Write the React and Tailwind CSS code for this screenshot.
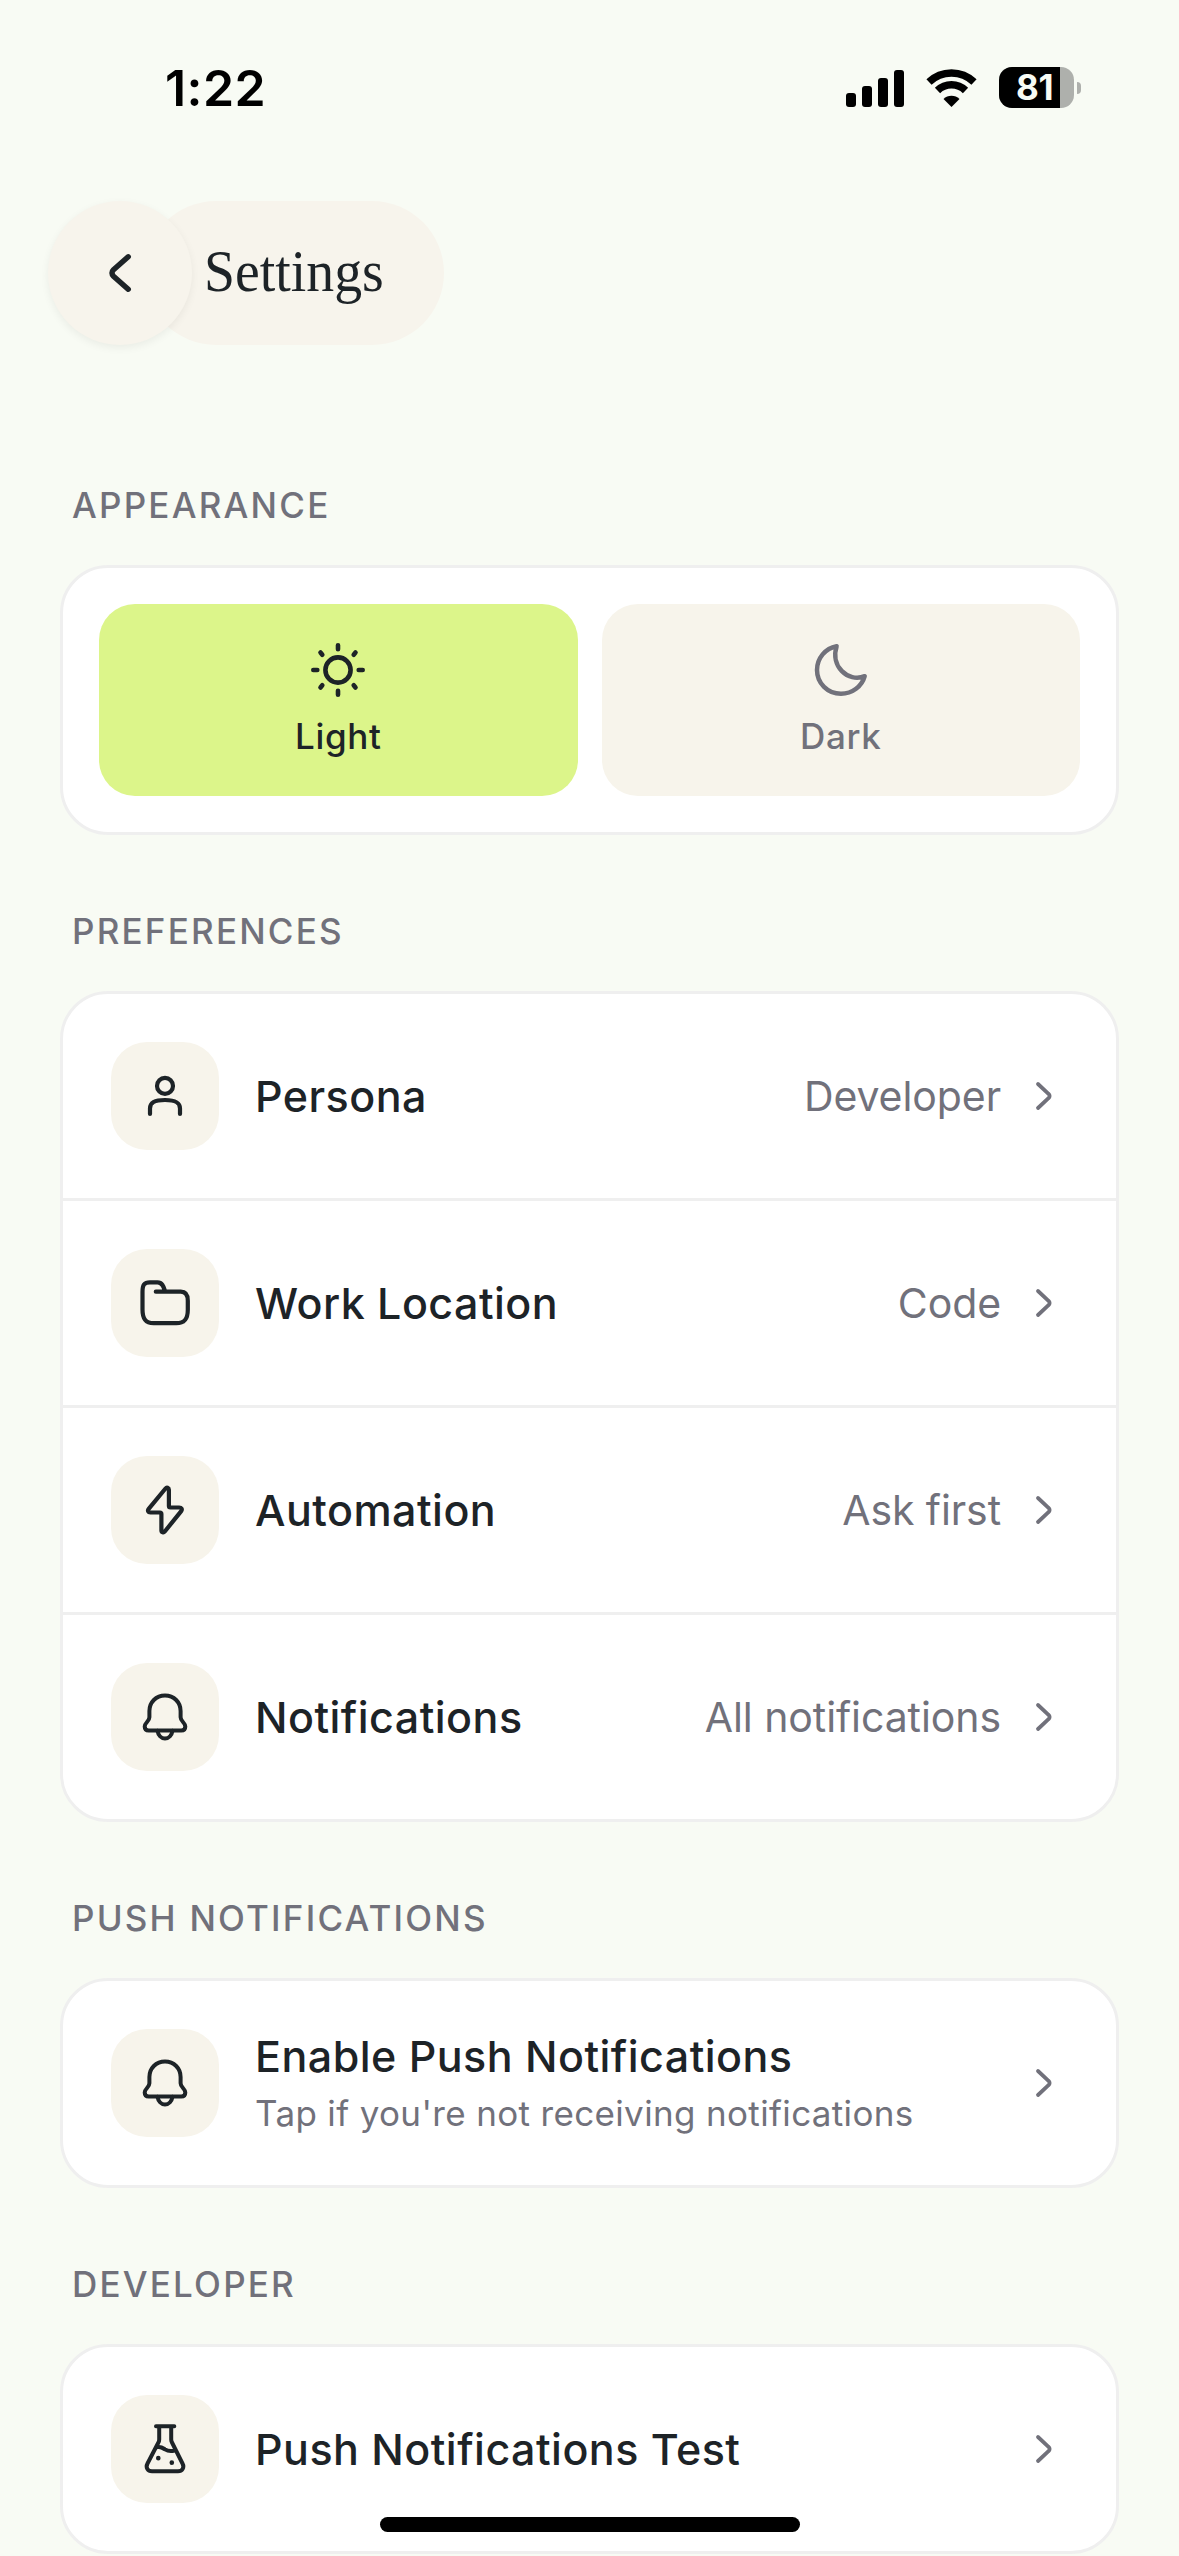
import { clsx } from 'clsx';

const stroke = {
  fill: 'none',
  stroke: 'currentColor',
  strokeLinecap: 'round',
  strokeLinejoin: 'round',
};

function SunIcon() {
  return (
    <svg className="size-[60px]" viewBox="0 0 60 60" strokeWidth="4.6" {...stroke}>
      <circle cx="30" cy="30" r="12.6" />
      <path d="M30 5.3v4M30 50.7v4M5.3 30h4M50.7 30h4M12.5 12.5l1.8 2.2M47.5 12.5l-1.8 2.2M12.5 47.5l1.8-2.2M47.5 47.5l-1.8-2.2" />
    </svg>
  );
}

function MoonIcon() {
  return (
    <svg className="size-[60px]" viewBox="0 0 60 60" strokeWidth="4.5" {...stroke}>
      <path d="M25.6 6.2C14.5 8.2 6 18.1 6 30c0 13.3 10.7 23.8 24 23.8 11.3 0 20.9-7.4 23.7-17.6-16.8 6.6-34.6-10.2-28.1-30Z" />
    </svg>
  );
}

function UserIcon() {
  return (
    <svg className="size-[54px]" viewBox="0 0 54 54" strokeWidth="4.2" {...stroke}>
      <circle cx="27" cy="16.9" r="8" />
      <path d="M12 45v-5.5c0-6 4.5-8.5 15-8.5s15 2.5 15 8.5V45" />
    </svg>
  );
}

function FolderIcon() {
  return (
    <svg className="size-[54px]" viewBox="0 0 54 54" strokeWidth="4.2" {...stroke}>
      <path d="M17.8 15.7h25c5.5 0 7 3.5 7 9v9c0 9-3 13.5-11.5 13.5H15.7C7.5 47.2 4.5 42.5 4.5 33.5V16c0-7 1.5-9.7 7.5-9.7h7.5c4.5 0 6 3.5 7.5 8.5" />
    </svg>
  );
}

function BoltIcon() {
  return (
    <svg className="size-[54px]" viewBox="0 0 54 54" strokeWidth="4.2" {...stroke}>
      <path d="M30.9 15v8c0 .9.6 1.5 1.5 1.5h8.8c2.3 0 3.3 1.8 2 3.6L26.8 48.5c-1.2 1.4-3.4.8-3.4-1V31c0-.9-.6-1.5-1.5-1.5h-9.5c-2.3 0-3.1-2-1.7-3.7L27.5 5.500c1.200-1.400 3.400-.7 3.400 1.200Z" />
    </svg>
  );
}

function BellIcon() {
  return (
    <svg className="size-[54px]" viewBox="0 0 54 54" strokeWidth="4" {...stroke}>
      <path d="M27 5.5c-9 0-15.6 6.8-15.6 15.5v6.3c0 4.2-4.7 5.2-4.7 9.3 0 2.5 1.5 4 4 4h32.6c2.5 0 4-1.5 4-4 0-4.1-4.7-5.1-4.7-9.300V21C42.600 12.300 36 5.500 27 5.500Z" />
      <path d="M19.5 40.8c.8 4.600 3.900 7.700 7.500 7.700s6.700-3.100 7.500-7.700" />
    </svg>
  );
}

function FlaskIcon() {
  return (
    <svg className="size-[54px]" viewBox="0 0 54 54" strokeWidth="4" {...stroke}>
      <path d="M18 4.3h18.3M21.2 5v12.5c0 1-.2 2-.8 3L9.5 41.5c-2.2 4.3.3 7.7 4.5 7.7h26c4.2 0 6.7-3.4 4.5-7.7L34 20.5c-.5-1-.8-2-.8-3V5" />
      <path d="M19 25.2c3.5-1.2 5.5.5 8 2.2 2.5 1.6 5.5 2.2 9.5 1.2" />
      <path d="M20.3 36v.3M33.8 40.5v.3" strokeWidth="4.6" />
    </svg>
  );
}

function ChevronRight() {
  return (
    <svg className="h-[36px] w-[20px] shrink-0" viewBox="0 0 20 36" strokeWidth="3.8" {...stroke}>
      <path d="M4 6l10.5 9.8c1.5 1.3 1.5 3.1 0 4.4L4 30" />
    </svg>
  );
}

function StatusBar() {
  return (
    <div className="flex h-[60px] items-center justify-between pt-px pr-[98px] pl-[165px] text-black">
      <span className="text-[50px] leading-none font-semibold tracking-[0.008em]">1:22</span>
      <div className="flex items-center">
        <svg className="h-[38px] w-[58px]" viewBox="0 0 58 38" fill="currentColor">
          <rect x="0" y="24" width="10" height="14" rx="3" />
          <rect x="16" y="17" width="10" height="21" rx="3" />
          <rect x="32" y="9" width="10" height="29" rx="3" />
          <rect x="48" y="1" width="10" height="37" rx="3" />
        </svg>
        <svg className="ml-[22px] h-[38px] w-[51px]" viewBox="0 0 51 38">
          <path d="M3 13A32.5 32.5 0 0 1 48 13" fill="none" stroke="currentColor" strokeWidth="7.5" />
          <path d="M11.5 21.5a20 20 0 0 1 28 0" fill="none" stroke="currentColor" strokeWidth="7.5" />
          <path d="M17.5 30a11.5 11.5 0 0 1 16 0l-8 8Z" fill="currentColor" />
        </svg>
        <div className="ml-[22px] flex h-[41px] w-[75px] items-center overflow-hidden rounded-[13px] bg-[#aeb0ac]">
          <div className="flex h-full w-[61px] items-center bg-black pl-[17px]">
            <span className="text-[35px] leading-none font-bold tracking-[-0.01em] text-[#f8fbf4]">81</span>
          </div>
        </div>
        <div className="ml-[3px] h-[12px] w-[4px] rounded-r-full bg-[#aeb0ac]" />
      </div>
    </div>
  );
}

function Header() {
  return (
    <header className="flex h-[144px] px-12">
      <button className="z-10 flex size-[144px] items-center justify-center rounded-full bg-[#f7f4ec] shadow-[0_3px_9px_rgba(0,0,0,0.06)]">
        <svg className="h-[48px] w-[30px]" viewBox="0 0 30 48" strokeWidth="5.5" {...stroke}>
          <path d="M23.2 7.8L8.5 20.8c-2 1.9-2 4.5 0 6.4L23.2 40.2" />
        </svg>
      </button>
      <div className="-ml-12 flex w-[300px] items-center rounded-full bg-[#f7f4ec] pb-1 pl-[60px]">
        <h1 className="origin-left scale-x-[0.93] font-['Liberation_Serif',serif] text-[60px] leading-none">
          Settings
        </h1>
      </div>
    </header>
  );
}

function Section({ title, children }) {
  return (
    <section>
      <h2 className="mt-[72px] mb-[36px] pl-3 text-[35px] leading-[48px] font-medium tracking-[0.063em] text-zinc-500 uppercase">
        {title}
      </h2>
      <div className="overflow-hidden rounded-[48px] border-3 border-[#efefef] bg-white">{children}</div>
    </section>
  );
}

function ThemeButton({ icon, label, active }) {
  return (
    <button
      className={clsx(
        'flex h-[192px] flex-1 flex-col items-center justify-center gap-3 rounded-[36px]',
        active ? 'bg-[#dcf58a]' : 'bg-[#f7f4eb] text-zinc-500'
      )}
    >
      {icon}
      <span className="text-[35px] leading-[48px] font-medium tracking-[0.018em]">{label}</span>
    </button>
  );
}

function Row({ icon, title, subtitle, value }) {
  return (
    <div className="flex h-[204px] items-center box-content border-b-3 border-[#efefef] pr-[62px] pl-12 last:border-b-0">
      <div className="flex size-[108px] shrink-0 items-center justify-center rounded-[36px] bg-[#f7f4eb]">
        {icon}
      </div>
      <div className="ml-9 flex flex-1 flex-col">
        <span className="text-[43px] leading-[60px] font-medium tracking-[0.011em]">{title}</span>
        {subtitle && (
          <span className="text-[35px] leading-[54px] tracking-[0.01em] text-zinc-500">{subtitle}</span>
        )}
      </div>
      {value && (
        <span className="mr-[33px] text-[41px] leading-[60px] tracking-[-0.002em] text-zinc-500">{value}</span>
      )}
      <span className="text-zinc-500">
        <ChevronRight />
      </span>
    </div>
  );
}

const preferences = [
  { title: 'Persona', value: 'Developer', icon: <UserIcon /> },
  { title: 'Work Location', value: 'Code', icon: <FolderIcon /> },
  { title: 'Automation', value: 'Ask first', icon: <BoltIcon /> },
  { title: 'Notifications', value: 'All notifications', icon: <BellIcon /> },
];

export default function App() {
  return (
    <div className="relative flex h-[2556px] w-[1179px] flex-col overflow-hidden bg-[#f8fbf4] pt-[57px] font-['Inter',sans-serif] text-[#1d2327]">
      <StatusBar />
      <div className="mt-[84px]">
        <Header />
      </div>

      <main className="mt-[64px] px-[60px]">
        <Section title="Appearance">
          <div className="flex gap-6 p-9">
            <ThemeButton icon={<SunIcon />} label="Light" active />
            <ThemeButton icon={<MoonIcon />} label="Dark" />
          </div>
        </Section>

        <Section title="Preferences">
          {preferences.map(p => (
            <Row key={p.title} {...p} />
          ))}
        </Section>

        <Section title="Push Notifications">
          <Row
            icon={<BellIcon />}
            title="Enable Push Notifications"
            subtitle="Tap if you're not receiving notifications"
          />
        </Section>

        <Section title="Developer">
          <Row icon={<FlaskIcon />} title="Push Notifications Test" />
        </Section>
      </main>

      {/* home indicator */}
      <div className="absolute bottom-6 left-[380px] h-[15px] w-[420px] rounded-full bg-black" />
    </div>
  );
}
